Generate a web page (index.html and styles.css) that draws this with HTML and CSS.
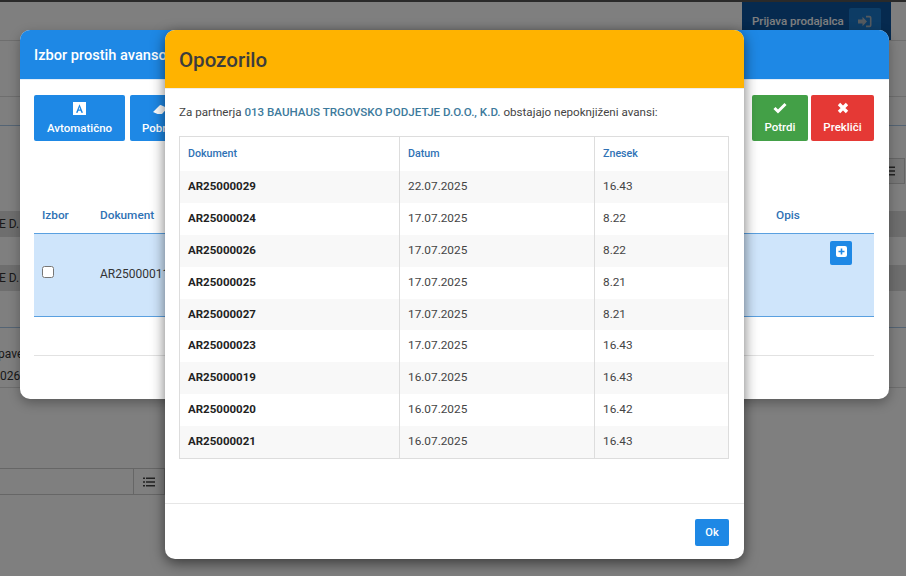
FILE: index.html
```html
<!DOCTYPE html>
<html lang="sl">
<head>
    <meta charset="UTF-8">
    <meta name="viewport" content="width=device-width, initial-scale=1.0">
    <title>Opozorilo</title>
    <link rel="stylesheet" href="styles.css">
</head>
<body>
    <div class="page">
        <div class="topbar">
            <div class="seller">
                <span>Prijava prodajalca</span>
                <button class="seller-btn">
                    <svg width="14" height="13" viewBox="0 0 14 13"><path d="M0 4.500h4.500V1.800L9 6.500l-4.500 4.700V8.500H0z" fill="#a9b4bf"/><path d="M8 .8h3.500a2 2 0 0 1 2 2v7.400a2 2 0 0 1-2 2H8v-1.600h3.300a.6.6 0 0 0 .6-.6V3a.6.6 0 0 0-.6-.6H8z" fill="#a9b4bf"/></svg>
                </button>
            </div>
        </div>
        <div class="bg-line bg-line-1"></div>
        <div class="bg-line bg-line-2"></div>
        <div class="bg-tools">
            <button class="bg-list-btn">
                <svg width="12" height="10" viewBox="0 0 12 10"><path d="M0 .5h2v1.500H0zM3 .5h9v1.500H3zM0 4.200h2v1.500H0zM3 4.200h9v1.500H3zM0 8h2v1.500H0zM3 8h9v1.500H3z" fill="#444"/></svg>
            </button>
        </div>
        <div class="bg-row">E D.</div>
        <div class="bg-row bg-row-2">E D.</div>
        <div class="bg-foot">
            <div class="bg-foot-a">pave</div>
            <div class="bg-foot-b">026</div>
        </div>
        <div class="bg-search">
            <div class="bg-input"></div>
            <button class="bg-list-btn bg-list-btn-2">
                <svg width="12" height="10" viewBox="0 0 12 10"><path d="M0 .5h2v1.500H0zM3 .5h9v1.500H3zM0 4.200h2v1.500H0zM3 4.200h9v1.500H3zM0 8h2v1.500H0zM3 8h9v1.500H3z" fill="#444"/></svg>
            </button>
        </div>
    </div>
    <div class="backdrop"></div>

    <div class="modal modal-back">
        <div class="back-header">Izbor prostih avansov</div>
        <div class="back-body">
            <div class="toolbar">
                <button class="tool-btn btn-blue btn-auto">
                    <svg width="13" height="13" viewBox="0 0 13 13"><path fill-rule="evenodd" d="M0 0h13v13H0zM6.500 2.200 3 10.800h1.700l.7-2h2.200l.7 2H10zM6.500 5l.7 2.400H5.800z" fill="#fff"/></svg>
                    Avtomatično
                </button>
                <button class="tool-btn btn-blue btn-clear">
                    <svg width="16" height="13" viewBox="0 0 16 13"><path d="M5.500 12 1 10l6.500-6.500a1.500 1.500 0 0 1 1.800-.3l5 2.300c.7.300.8 1 .3 1.500L10 12z" fill="#fff"/></svg>
                    Pobriši
                </button>
                <div class="toolbar-gap"></div>
                <button class="tool-btn btn-green">
                    <svg width="14" height="12" viewBox="0 0 14 12"><path d="M1.500 6 5 9.500 12.500 2" fill="none" stroke="#fff" stroke-width="3"/></svg>
                    Potrdi
                </button>
                <button class="tool-btn btn-red">
                    <svg width="12" height="12" viewBox="0 0 12 12"><path d="M2 2l8 8M10 2l-8 8" fill="none" stroke="#fff" stroke-width="3.400"/></svg>
                    Prekliči
                </button>
            </div>
            <div class="back-table">
                <div class="back-head">
                    <span class="col-izbor">Izbor</span>
                    <span class="col-dok">Dokument</span>
                    <span class="col-opis">Opis</span>
                </div>
                <div class="back-row">
                    <span class="col-izbor"><input type="checkbox" class="check"></span>
                    <span class="col-dok">AR25000011</span>
                    <span class="col-opis"></span>
                    <button class="plus-btn">
                        <svg width="11" height="11" viewBox="0 0 11 11"><path fill-rule="evenodd" d="M2 0h7a2 2 0 0 1 2 2v7a2 2 0 0 1-2 2H2a2 2 0 0 1-2-2V2a2 2 0 0 1 2-2zM4.700 2.500v2.200H2.500v1.600h2.200v2.200h1.600V6.300h2.200V4.700H6.300V2.500z" fill="#fff"/></svg>
                    </button>
                </div>
            </div>
            <div class="back-rule"></div>
        </div>
    </div>

    <div class="modal modal-front">
        <div class="front-header">Opozorilo</div>
        <div class="front-body">
            <p class="front-msg">Za partnerja <b>013 BAUHAUS TRGOVSKO PODJETJE D.O.O., K.D.</b> obstajajo nepoknjiženi avansi:</p>
            <table class="doc-table">
                <thead>
                    <tr><th class="c1">Dokument</th><th class="c2">Datum</th><th>Znesek</th></tr>
                </thead>
                <tbody>
                    <tr><td><b>AR25000029</b></td><td>22.07.2025</td><td>16.43</td></tr>
                    <tr><td><b>AR25000024</b></td><td>17.07.2025</td><td>8.22</td></tr>
                    <tr><td><b>AR25000026</b></td><td>17.07.2025</td><td>8.22</td></tr>
                    <tr><td><b>AR25000025</b></td><td>17.07.2025</td><td>8.21</td></tr>
                    <tr><td><b>AR25000027</b></td><td>17.07.2025</td><td>8.21</td></tr>
                    <tr><td><b>AR25000023</b></td><td>17.07.2025</td><td>16.43</td></tr>
                    <tr><td><b>AR25000019</b></td><td>16.07.2025</td><td>16.43</td></tr>
                    <tr><td><b>AR25000020</b></td><td>16.07.2025</td><td>16.42</td></tr>
                    <tr><td><b>AR25000021</b></td><td>16.07.2025</td><td>16.43</td></tr>
                </tbody>
            </table>
        </div>
        <div class="front-footer">
            <button class="ok-btn">Ok</button>
        </div>
    </div>
</body>
</html>
```

FILE: styles.css
```css
html, body {
    margin: 0;
    height: 576px;
    overflow: hidden;
}
body {
    font-family: Roboto, "Liberation Sans", sans-serif;
    font-size: 12px;
    color: #333;
    background: #fff;
}
button {
    font-family: inherit;
    cursor: pointer;
}

/* page behind the dialogs */
.page {
    height: 574px;
    border-top: 2px solid #555;
    border-bottom: 2px solid #ddd;
    box-sizing: content-box;
}
.topbar {
    display: flex;
    justify-content: flex-end;
    height: 38px;
    padding-right: 15px;
    border-bottom: 1px solid #ddd;
}
.seller {
    display: flex;
    align-items: center;
    gap: 5px;
    width: 149px;
    box-sizing: border-box;
    padding: 0 0 0 10px;
    background: #0c559f;
    color: #fff;
    font-weight: 500;
    font-size: 11.500px;
}
.seller-btn {
    width: 32px;
    height: 26px;
    border: 0;
    border-radius: 2px;
    background: #1b78ca;
    display: flex;
    align-items: center;
    justify-content: center;
}
.bg-line {
    border-bottom: 1px solid #ddd;
}
.bg-line-1 {
    height: 55px;
}
.bg-line-2 {
    height: 28px;
    border-bottom-color: #a9c8e8;
}
.bg-tools {
    display: flex;
    justify-content: flex-end;
    padding: 32px 1px 0 0;
}
.bg-list-btn {
    width: 32px;
    height: 26px;
    border: 1px solid #ccc;
    background: #eee;
    display: flex;
    align-items: center;
    justify-content: center;
}
.bg-row {
    height: 26px;
    line-height: 26px;
    margin-top: 27px;
    background: #ddd;
    text-indent: -1px;
}
.bg-row-2 {
    margin-top: 28px;
}
.bg-foot {
    margin-top: 36px;
    border-top: 1px solid #a9c8e8;
}
.bg-foot-a {
    height: 35px;
    line-height: 52px;
    text-indent: -2px;
}
.bg-foot-b {
    height: 24px;
    line-height: 26px;
    border-bottom: 1px solid #ddd;
}
.bg-search {
    display: flex;
    width: 165px;
    margin-top: 80px;
}
.bg-input {
    flex: 1;
    height: 25px;
    border: 1px solid #ccc;
    border-left: 0;
}
.bg-list-btn-2 {
    width: 31px;
    height: 27px;
    background: #fff;
    border-left: 0;
}
.backdrop {
    position: absolute;
    left: 0;
    top: 0;
    width: 906px;
    height: 576px;
    background: rgba(0, 0, 0, 0.5);
}

/* dialogs */
.modal {
    position: absolute;
    display: flex;
    flex-direction: column;
    background: #fff;
    border-radius: 10px;
    overflow: hidden;
}
.modal-back {
    left: 20px;
    top: 30px;
    width: 869px;
    height: 369px;
    box-shadow: 0 4px 12px rgba(0, 0, 0, 0.3);
}
.modal-front {
    left: 165px;
    top: 30px;
    width: 579px;
    height: 529px;
    box-shadow: 0 4px 14px rgba(0, 0, 0, 0.55);
}
.back-header {
    height: 49px;
    line-height: 50px;
    padding-left: 14px;
    background: #1e88e5;
    color: #fff;
    font-size: 14.600px;
    font-weight: 500;
    border-bottom: 1px solid #e4eef8;
}
.back-body {
    padding: 15px 15px 0 14px;
}
.toolbar {
    display: flex;
    gap: 5px;
}
.toolbar-gap {
    flex: 1;
}
.tool-btn {
    display: flex;
    flex-direction: column;
    align-items: center;
    gap: 6px;
    height: 46px;
    padding: 7px 0 0;
    box-sizing: border-box;
    border: 0;
    border-radius: 2px;
    color: #fff;
    font-size: 11.500px;
    font-weight: 500;
}
.btn-blue {
    background: #1e88e5;
}
.btn-auto {
    width: 91px;
}
.btn-clear {
    width: 60px;
}
.btn-green {
    width: 56px;
    background: #43a047;
    margin-right: -2px;
}
.btn-red {
    width: 63px;
    background: #e53935;
}
.back-table {
    margin-top: 56px;
}
.back-head {
    display: flex;
    height: 37px;
    line-height: 36px;
    color: #2f72b5;
    font-size: 11.800px;
    font-weight: 500;
    border-bottom: 1px solid #5aa0e0;
    box-sizing: border-box;
}
.col-izbor {
    width: 66px;
    padding-left: 8px;
    box-sizing: border-box;
}
.col-dok {
    width: 676px;
}
.col-opis {
    width: 50px;
}
.back-row {
    position: relative;
    display: flex;
    height: 83px;
    background: #cfe5fb;
    border-bottom: 1px solid #5aa0e0;
    box-sizing: border-box;
    padding-top: 32px;
    line-height: 16px;
}
.check {
    width: 12px;
    height: 12px;
    margin: 0;
    display: block;
}
.plus-btn {
    position: absolute;
    right: 22px;
    top: 7px;
    width: 22px;
    height: 24px;
    padding: 0 0 4px;
    border: 0;
    border-radius: 2px;
    background: #1e88e5;
    display: flex;
    align-items: center;
    justify-content: center;
}
.back-rule {
    margin-top: 38px;
    border-top: 1px solid #e2e2e2;
}
.front-header {
    height: 58px;
    line-height: 60px;
    padding-left: 14px;
    background: #ffb300;
    color: #3d3d3d;
    font-size: 20.500px;
    font-weight: 500;
    border-bottom: 1px solid #eee;
}
.front-body {
    flex: 1;
    padding: 0 15px 0 15px;
}
.front-msg {
    margin: 15px 0 16px -1px;
    line-height: 16px;
    font-size: 11.600px;
    color: #444;
}
.front-msg b {
    font-weight: 500;
    color: #3d7a9c;
}
.doc-table {
    width: 550px;
    margin-left: -1px;
    border-collapse: collapse;
    border: 1px solid #ddd;
    table-layout: fixed;
}
.doc-table th {
    height: 32px;
    padding: 0 8px 2px;
    text-align: left;
    font-size: 10.700px;
    font-weight: 500;
    color: #2f72b5;
}
.doc-table td {
    height: 29.900px;
    padding: 0 8px 2px;
    font-size: 11.800px;
    color: #444;
}
.doc-table th, .doc-table td {
    border-left: 1px solid #ddd;
    border-right: 1px solid #ddd;
}
.doc-table td b {
    font-size: 11.500px;
    font-weight: 700;
    color: #222;
}
.doc-table tbody tr:nth-child(odd) {
    background: #f8f8f8;
}
.c1 {
    width: 203px;
}
.c2 {
    width: 178px;
}
.front-footer {
    display: flex;
    justify-content: flex-end;
    height: 56px;
    padding: 15px 15px 0 0;
    box-sizing: border-box;
    border-top: 1px solid #e6e6e6;
}
.ok-btn {
    width: 34px;
    height: 27px;
    padding: 0;
    border: 0;
    border-radius: 2px;
    background: #1e88e5;
    color: #fff;
    font-size: 11px;
    font-weight: 500;
}
```
